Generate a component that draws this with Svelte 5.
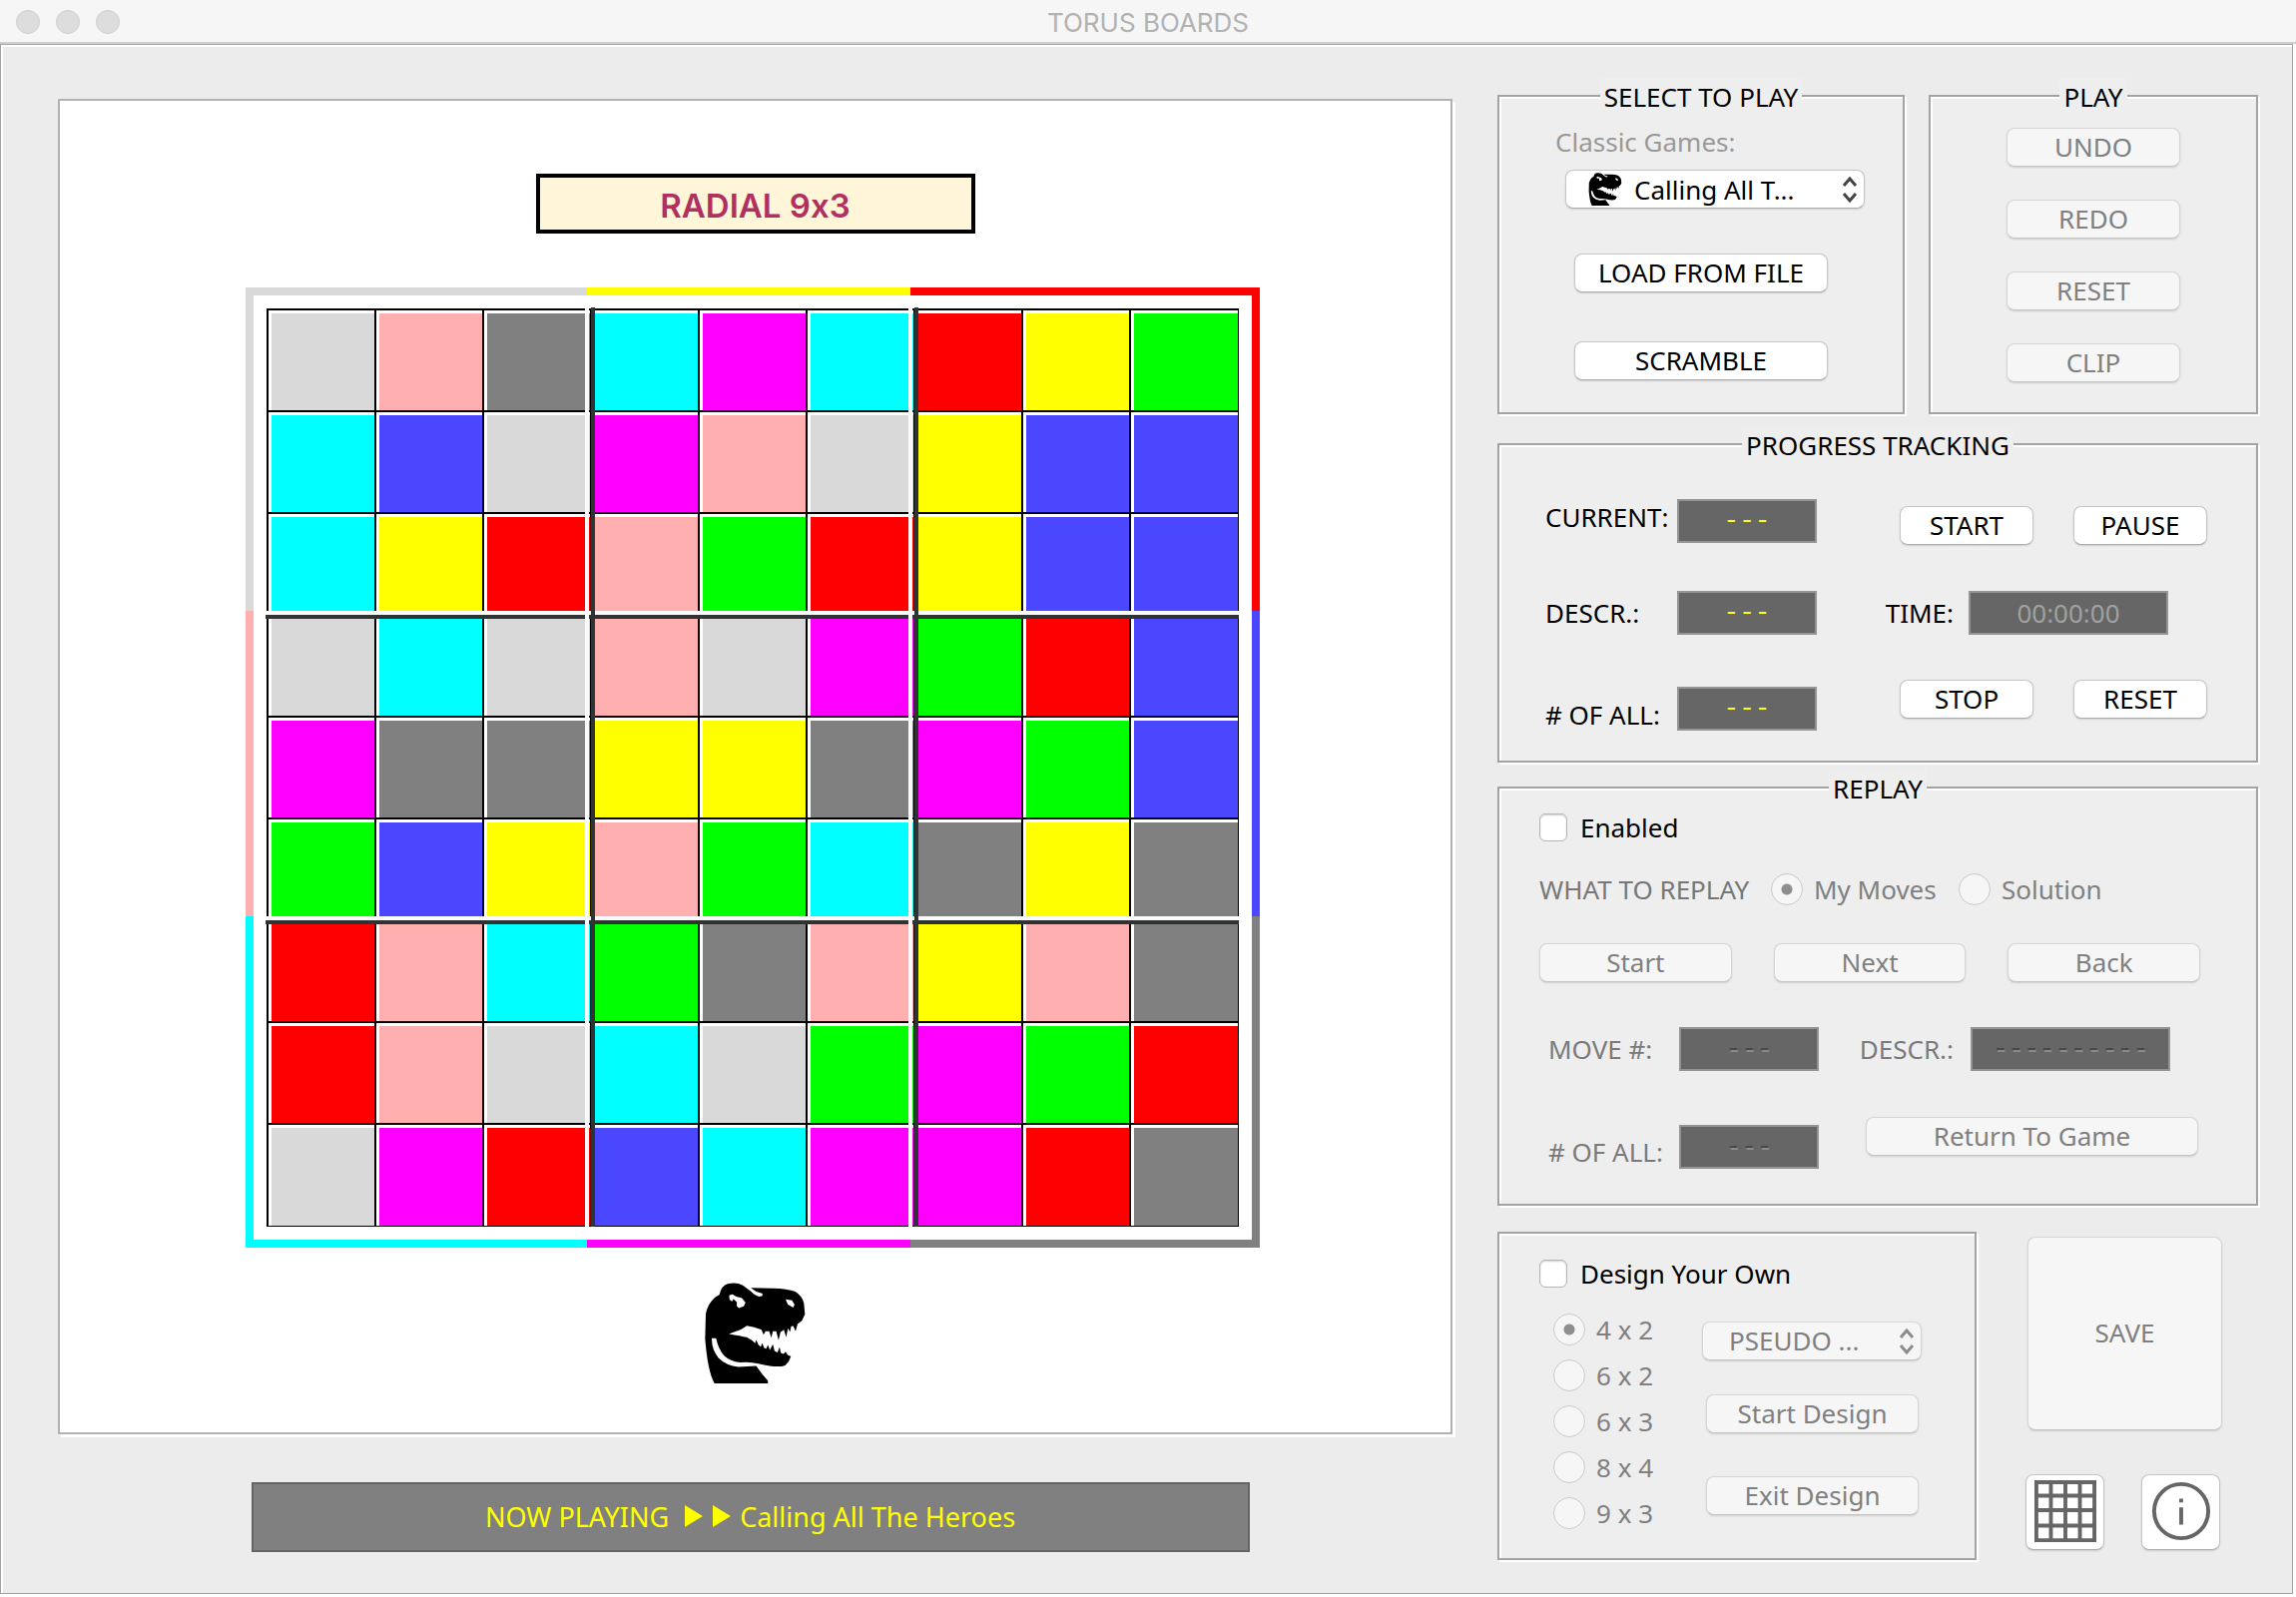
<script>
  const palette = {
    L: '#d9d9d9', P: '#ffafaf', D: '#808080', C: '#00ffff', M: '#ff00ff',
    R: '#ff0000', Y: '#ffff00', G: '#00ff00', B: '#4b46ff'
  };
  const rows = [
    'LPDCMCRYG',
    'CBLMPLYBB',
    'CYRPGRYBB',
    'LCLPLMGRB',
    'MDDYYDMGB',
    'GBYPGCDYD',
    'RPCGDPYPD',
    'RPLCLGMGR',
    'LMRBCMMRD'
  ];
  const cells = rows.join('').split('');
  const ring = { top: 'LYR', left: 'LPC', right: 'RBD', bottom: 'CMD' };
  const sizes = ['4 x 2', '6 x 2', '6 x 3', '8 x 4', '9 x 3'];
  const playActions = ['UNDO', 'REDO', 'RESET', 'CLIP'];

  let replayEnabled = $state(false);
  let designEnabled = $state(false);
  let size = $state('4 x 2');
  let source = $state('moves');
</script>

{#snippet dino()}
  <svg class="dino" viewBox="84 76 302 302" aria-hidden="true">
    <path fill-rule="evenodd" d="M113 378C98 350 90 305 85 245L87 170Q92 140 115 120L128 112Q134 84 155 79Q180 74 198 84L222 102Q232 114 246 118L256 116L257 109L238 103L222 92L290 93Q330 94 355 103Q376 116 381 138L384 170L375 190L362 200L356 222L349 206L343 207L339 224L333 213L328 240L321 217L311 224L305 249L298 222L288 222L283 241L277 222L266 222L260 232L254 217L232 210L210 205Q196 216 178 222L156 230Q192 236 210 240L225 249L235 258L238 247L245 263L252 268L256 257L262 272L268 274L273 263L279 278L288 261L293 281L302 285L308 269L312 287L320 290L326 283L332 293L342 297Q338 312 325 324Q300 333 245 319Q220 312 190 315Q160 312 142 295Q124 275 118 243L105 243Q104 275 125 302Q148 325 185 329L238 326L256 350L273 370V378ZM157 114L167 111L178 118L195 122L206 136L201 147L186 152L180 146L180 134L170 125L165 133L158 126ZM326 126L345 129L353 142L349 151L333 142Z" />
  </svg>
{/snippet}

{#snippet chevrons()}
  <svg class="chevrons" viewBox="0 0 16 26" aria-hidden="true">
    <path d="M2 9 8 2 14 9M2 17 8 24 14 17" />
  </svg>
{/snippet}

{#snippet strip(side)}
  <div class="strip {side}">
    {#each ring[side].split('') as c}<span style:background={palette[c]}></span>{/each}
  </div>
{/snippet}

<div class="window">
  <header class="titlebar">
    <div class="lights"><i></i><i></i><i></i></div>
    <h1>TORUS BOARDS</h1>
  </header>

  <main>
    <section class="stage">
      <div class="canvas">
        <h2>RADIAL 9x3</h2>
        <div class="frame">
          {@render strip('top')}
          {@render strip('left')}
          <div class="inner">
            <div class="board">
              {#each cells as c}<div class="cell" style:background={palette[c]}></div>{/each}
              <div class="seams">
                <i class="across second"></i><i class="across third"></i>
                <i class="down second"></i><i class="down third"></i>
              </div>
            </div>
          </div>
          {@render strip('right')}
          {@render strip('bottom')}
        </div>
        <div class="mascot">{@render dino()}</div>
      </div>
      <div class="nowplaying">
        <p>
          NOW PLAYING
          <svg viewBox="0 0 46 22" aria-hidden="true"><path d="M0 0 18 11 0 22ZM28 0 46 11 28 22Z" /></svg>
          Calling All The Heroes
        </p>
      </div>
    </section>

    <aside>
      <div class="toprow">
        <fieldset>
          <legend>SELECT TO PLAY</legend>
          <div class="choose">
            <label class="hint" for="game">Classic Games:</label>
            <div class="picker game">
              {@render dino()}
              <select id="game"><option>Calling All T...</option></select>
              {@render chevrons()}
            </div>
            <button type="button">LOAD FROM FILE</button>
            <button type="button">SCRAMBLE</button>
          </div>
        </fieldset>
        <fieldset>
          <legend>PLAY</legend>
          <div class="actions">
            {#each playActions as name}<button type="button" disabled>{name}</button>{/each}
          </div>
        </fieldset>
      </div>

      <fieldset class="progress">
        <legend>PROGRESS TRACKING</legend>
        <div class="tracking">
          <div class="names">
            <label for="current">CURRENT:</label>
            <label for="descr">DESCR.:</label>
            <label for="all"># OF ALL:</label>
          </div>
          <div class="values">
            <input id="current" class="dash" value="---" readonly />
            <input id="descr" class="dash" value="---" readonly />
            <input id="all" class="dash" value="---" readonly />
          </div>
          <div class="timer">
            <div class="pair"><button type="button">START</button><button type="button">PAUSE</button></div>
            <div class="time">
              <label for="time">TIME:</label>
              <input id="time" value="00:00:00" disabled />
            </div>
            <div class="pair"><button type="button">STOP</button><button type="button">RESET</button></div>
          </div>
        </div>
      </fieldset>

      <fieldset class="replay">
        <legend>REPLAY</legend>
        <div class="replaybody">
          <label class="check"><input type="checkbox" bind:checked={replayEnabled} />Enabled</label>
          <div class="source">
            <span>WHAT TO REPLAY</span>
            <label><input type="radio" name="source" value="moves" bind:group={source} disabled />My Moves</label>
            <label><input type="radio" name="source" value="solution" bind:group={source} disabled />Solution</label>
          </div>
          <div class="steps">
            <button type="button" disabled>Start</button>
            <button type="button" disabled>Next</button>
            <button type="button" disabled>Back</button>
          </div>
          <div class="info">
            <label for="move">MOVE #:</label>
            <input id="move" class="dash" value="---" disabled />
            <label class="second" for="rdescr">DESCR.:</label>
            <input id="rdescr" class="dash wide" value="----------" disabled />
          </div>
          <div class="info last">
            <label for="rall"># OF ALL:</label>
            <input id="rall" class="dash" value="---" disabled />
            <button type="button" disabled>Return To Game</button>
          </div>
        </div>
      </fieldset>

      <div class="bottomrow">
        <section class="design">
          <label class="check"><input type="checkbox" bind:checked={designEnabled} />Design Your Own</label>
          <div class="designbody">
            <div class="sizes">
              {#each sizes as s}
                <label><input type="radio" name="size" value={s} bind:group={size} disabled />{s}</label>
              {/each}
            </div>
            <div class="tools">
              <div class="picker off">
                <select aria-label="Board type" disabled><option>PSEUDO ...</option></select>
                {@render chevrons()}
              </div>
              <button type="button" disabled>Start Design</button>
              <button type="button" disabled>Exit Design</button>
            </div>
          </div>
        </section>
        <div class="extras">
          <button class="save" type="button" disabled>SAVE</button>
          <div class="icons">
            <button type="button" aria-label="Board grid">
              <svg viewBox="0 0 64 64"><path d="M2 2H62V62H2ZM2 16H62M2 31H62M2 47H62M17 2V62M32 2V62M47 2V62" /></svg>
            </button>
            <button type="button" aria-label="Information">
              <svg viewBox="0 0 64 64"><circle cx="32" cy="32" r="28" /><path d="M32 19V23M32 28V46" /></svg>
            </button>
          </div>
        </div>
      </div>
    </aside>
  </main>
</div>

<style>
  :global(body) { background: #fff; }
  .window, .window * { box-sizing: border-box; }
  .window {
    display: flex;
    flex-direction: column;
    min-height: 100vh;
    padding: 0 3px 3px 0;
    background: #fff;
    color: #000;
    font: 26px/34px "Noto Sans", "Open Sans", sans-serif;
  }
  h1, h2, p { margin: 0; }

  .titlebar {
    position: relative;
    margin-right: -3px;
    padding: 6px 0 3px;
    border-bottom: 2px solid #cfcfcf;
    background: #f6f6f6;
    text-align: center;
  }
  h1 { font: 400 26px/33px Inter, sans-serif; color: #b2b2b2; }
  .lights { position: absolute; left: 16px; top: 10px; display: flex; gap: 16px; }
  .lights i { width: 24px; height: 24px; border: 1px solid #cfcfcf; border-radius: 50%; background: #dddddd; }

  main {
    flex: 1;
    display: grid;
    grid-template-columns: 1400fr 762fr;
    column-gap: 42px;
    padding: 33px 34px 31px 57px;
    border: 1px solid #a2a2a2;
    box-shadow: inset 2px 2px #fff;
    background: #ececec;
  }

  .stage { display: flex; flex-direction: column; padding: 21px 3px 0 0; }
  .canvas {
    display: flex;
    flex-direction: column;
    align-items: center;
    padding: 73px 0 49px;
    border: 2px solid #b1b1b1;
    box-shadow: 3px 3px #fff;
    background: #fff;
  }
  h2 {
    width: 440px;
    padding-top: 4px;
    border: 4px solid #000;
    background: #fff6da;
    color: #b03060;
    font: 600 33px/48px Inter, sans-serif;
    font-feature-settings: "calt" 0;
    text-align: center;
  }
  .frame {
    display: grid;
    grid-template-columns: 8px 1fr 8px;
    grid-template-rows: 8px 1fr 8px;
    width: 100%;
    max-width: 1016px;
    margin: 54px 6px 35px 0;
  }
  .strip { display: flex; }
  .top, .bottom { grid-column: 1 / -1; }
  .left, .right { flex-direction: column; }
  .strip span { flex: 324 0 0; }
  .top span:first-child, .bottom span:first-child { flex-grow: 342; }
  .top span:last-child, .bottom span:last-child { flex-grow: 350; }
  .left span, .right span { flex-grow: 306; }
  .left span:first-child, .right span:first-child { flex-grow: 316; }
  .left span:last-child, .right span:last-child { flex-grow: 324; }
  .inner { padding: 13px; }
  .board {
    position: relative;
    display: grid;
    grid-template-columns: repeat(8, 108fr) 109fr;
    grid-template-rows: repeat(8, 102px) 103px;
    border: solid #000;
    border-width: 0 1px 1px 0;
  }
  .cell { border: solid #000; border-width: 2px 0 0 2px; box-shadow: inset 3px 3px #fff; }
  .seams {
    position: absolute;
    inset: 0;
    display: grid;
    grid-template-columns: repeat(2, 324fr) 325fr;
    grid-template-rows: repeat(2, 306px) 307px;
  }
  .across { grid-column: 1 / -1; height: 8px; margin: -3px -1px 0 -1px; border: solid #fafafa; border-width: 4px 0 0; background: #2f3333; }
  .down { grid-row: 1 / -1; width: 10px; margin: -1px 0 -1px -5px; border: 4px solid #fafafa; border-width: 0 4px; border-right-color: #2f3333; }
  .across.second { grid-row: 2; }
  .across.third { grid-row: 3; }
  .down.second { grid-column: 2; }
  .down.third { grid-column: 3; }
  .dino { display: block; width: 101px; height: 101px; fill: #000; }

  .nowplaying { padding: 48px 10px 0 0; }
  .nowplaying p {
    max-width: 1000px;
    margin: 0 auto;
    padding: 16px;
    border: 2px solid #646464;
    background: #808080;
    color: #ff0;
    font-size: 27px;
    text-align: center;
  }
  .nowplaying svg { width: 46px; height: 22px; margin: 0 2px 0 9px; fill: #ff0; }

  fieldset, .design {
    min-width: 0;
    margin: 0;
    padding: 0;
    border: 2px solid #a3a3a3;
    box-shadow: 2px 2px #fff, inset 2px 2px #fff;
    background: #eee;
  }
  legend { margin: 0 auto; padding: 2px 4px 0; background: #eee; }

  button, select, input { margin: 0; font: inherit; color: inherit; }
  button, select {
    height: 39px;
    padding: 0 0 2px;
    border: 1px solid #c6c6c6;
    border-bottom-color: #acacac;
    border-radius: 8px;
    background: #fff;
    box-shadow: 0 1px 2px #00000022;
  }
  button:disabled, select:disabled {
    border-color: #d6d6d6;
    border-bottom-color: #c4c4c4;
    background: #f6f6f6;
    color: #808080;
    opacity: 1;
  }

  .toprow { display: grid; grid-template-columns: 408fr 330fr; gap: 24px; }
  .choose { display: flex; flex-direction: column; align-items: center; padding: 11px 0 32px; }
  .choose button { width: 254px; margin-top: 45px; }
  .choose button + button { margin-top: 49px; }
  .hint { align-self: flex-start; margin: 0 0 11px 56px; color: #999; }
  .picker { position: relative; }
  .picker select { width: 100%; appearance: none; }
  .game { width: 300px; margin-left: 28px; }
  .game select { padding: 0 48px 0 68px; }
  .game .dino { position: absolute; left: 22px; top: 3px; width: 36px; height: 33px; pointer-events: none; }
  .chevrons { position: absolute; right: 7px; top: 7px; width: 16px; height: 26px; fill: none; stroke: #444; stroke-width: 3; pointer-events: none; }
  .off .chevrons { stroke: #8c8c8c; }
  .picker, .picker select { height: 39px; }
  .actions { display: flex; flex-direction: column; align-items: center; gap: 33px; padding: 14px 0 0; }
  .actions button { width: 174px; }

  .dash { font-family: "Liberation Mono", monospace; color: #ff0; }
  input:not([type]) {
    width: 140px;
    height: 44px;
    padding: 0;
    border: 2px solid #949494;
    background: #666;
    text-align: center;
  }
  input:not([type]):disabled { color: #a0a0a0; }
  input.dash:disabled { color: #484848; text-shadow: 1px 2px #8a8a8a; }
  input.wide.dash, #time { width: 200px; }

  .progress { margin-top: 12px; }
  .tracking { display: flex; padding: 37px 49px 29px 46px; }
  .names, .values, .timer { display: grid; align-items: start; }
  .names { width: 132px; grid-template-rows: 96px 102px 34px; padding-top: 1px; white-space: nowrap; }
  .values { grid-template-rows: 92px 96px 44px; }
  .timer { flex: 1; justify-content: end; grid-template-rows: 85px 89px 39px; padding-top: 7px; }
  .pair { display: flex; gap: 40px; justify-content: end; }
  .pair button { width: 134px; }
  .time { display: flex; align-items: center; gap: 15px; padding-right: 39px; }

  .replay { margin-top: 7px; }
  .replaybody { padding: 5px 0 35px 40px; }
  .check, .source label, .sizes label { display: flex; align-items: center; }
  .check { gap: 13px; }
  input[type='checkbox'], input[type='radio'] { flex: none; appearance: none; border: 1px solid #b5b5b5; background: #fff; }
  input[type='checkbox'] { width: 28px; height: 28px; border-radius: 6px; box-shadow: inset 0 1px 2px #00000030; }
  input[type='checkbox']:checked { background: #3b82f6; }
  input[type='radio'] { width: 32px; height: 32px; border-radius: 50%; border-color: #cacaca; background: #f6f6f6; }
  input[type='radio']:checked { background: radial-gradient(circle, #8f8f8f 0 5px, #f6f6f6 6px); }
  .source { display: flex; align-items: center; margin-top: 28px; color: #808080; white-space: nowrap; }
  .source span { width: 232px; color: #777; }
  .source label { gap: 11px; width: 188px; }
  .steps { display: flex; gap: 42px; margin: 37px 56px 0 0; }
  .steps button { flex: 1; }
  .info { display: flex; align-items: center; margin: 45px 86px 0 0; color: #7a7a7a; white-space: nowrap; }
  .info label { flex: none; width: 140px; padding-left: 9px; }
  .info .second { width: auto; margin-left: auto; margin-right: 17px; }
  .info.last { align-items: flex-end; height: 52px; margin: 46px 58px 0 0; }
  .last button { align-self: flex-start; width: 333px; margin-left: auto; }

  .bottomrow { display: flex; gap: 51px; margin-top: 26px; }
  .design { flex: 1; padding: 23px 0 28px 40px; }
  .designbody { display: flex; margin-top: 22px; color: #808080; }
  .sizes { display: flex; flex-direction: column; gap: 12px; width: 163px; padding-left: 14px; }
  .sizes label { gap: 11px; }
  .tools { display: grid; grid-template-rows: 73px 82px 39px; align-items: start; padding-top: 9px; }
  .off { width: 220px; }
  .off select { padding: 0 48px 2px 26px; }
  .tools button { width: 213px; margin-left: 4px; }
  .extras { display: flex; flex-direction: column; gap: 44px; width: 231px; padding: 5px 36px 0 0; }
  .extras .save { height: 194px; }
  .icons { display: flex; justify-content: space-between; margin: 0 2px 0 -2px; }
  .icons button { display: grid; place-items: center; width: 79px; height: 76px; }
  .icons svg { width: 62px; height: 62px; fill: none; stroke: #666; stroke-width: 4; }
</style>
